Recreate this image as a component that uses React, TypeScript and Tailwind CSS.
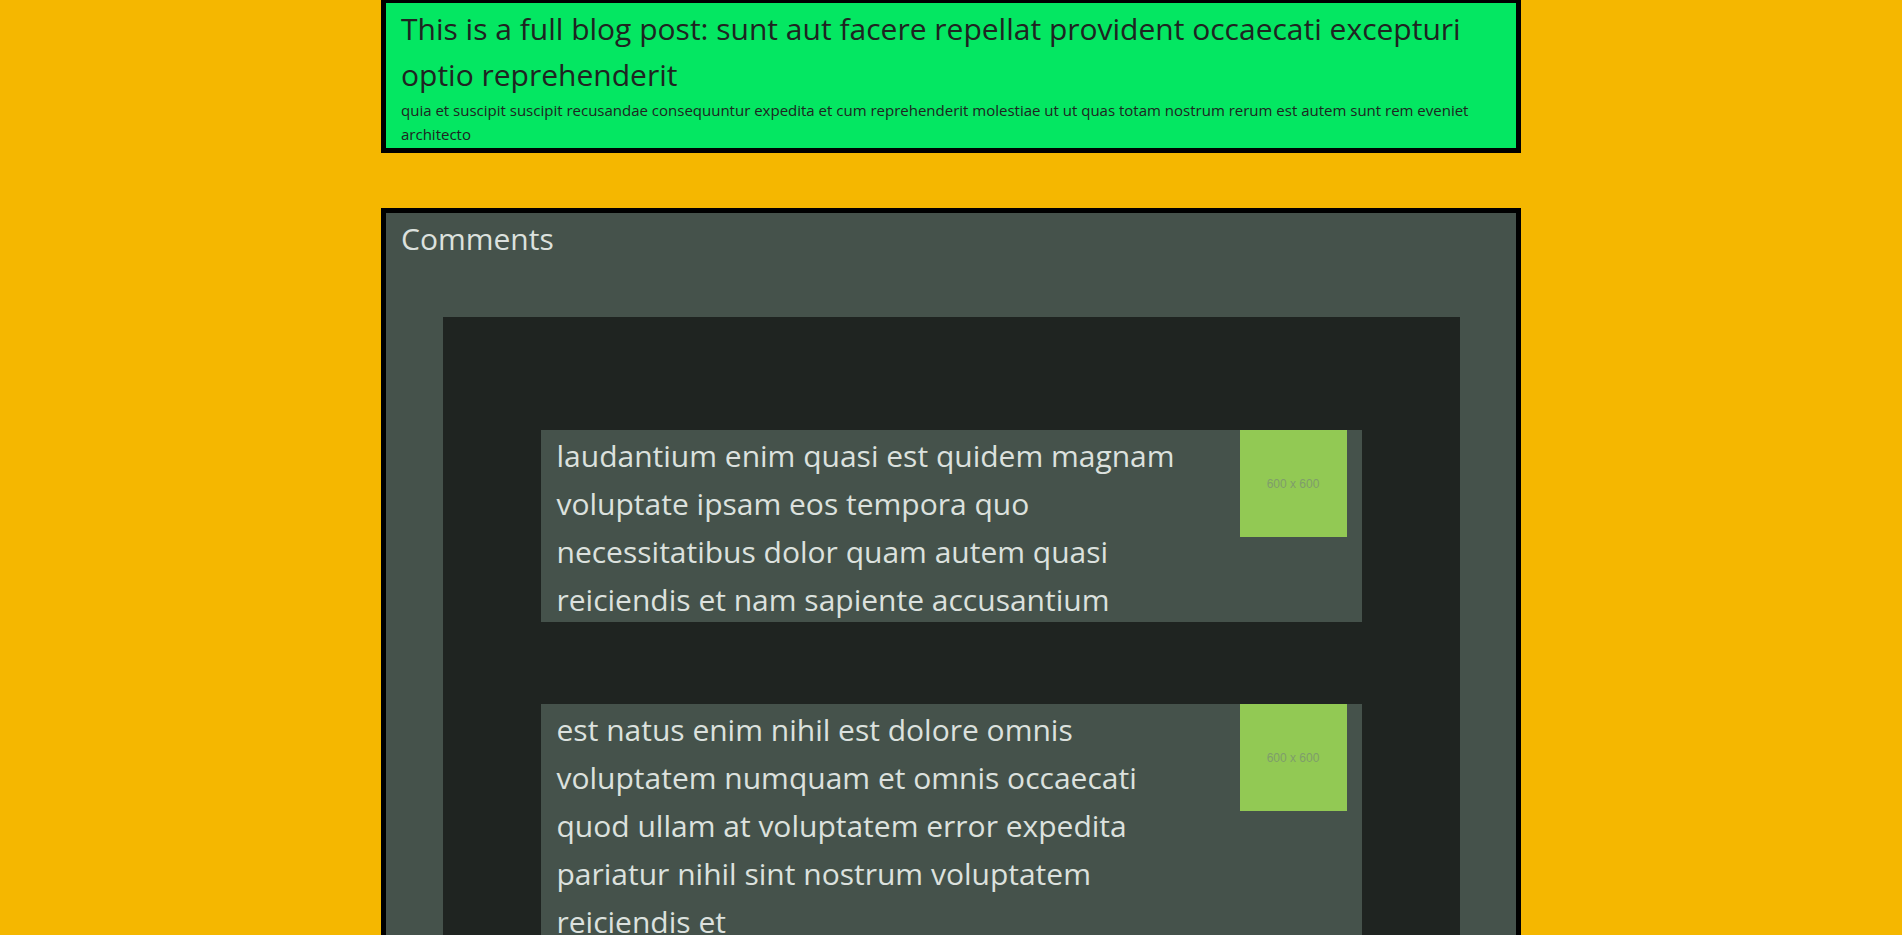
import React from 'react';

const comments = [
  {
    id: 1,
    body: 'laudantium enim quasi est quidem magnam voluptate ipsam eos tempora quo necessitatibus dolor quam autem quasi reiciendis et nam sapiente accusantium',
  },
  {
    id: 2,
    body: 'est natus enim nihil est dolore omnis voluptatem numquam et omnis occaecati quod ullam at voluptatem error expedita pariatur nihil sint nostrum voluptatem reiciendis et',
  },
  {
    id: 3,
    body: 'quia molestiae reprehenderit quasi aspernatur aut expedita occaecati aliquam eveniet laudantium omnis quibusdam delectus saepe quia accusamus maiores nam est cum et ducimus et vero voluptates excepturi deleniti ratione',
  },
];

function Placeholder() {
  return (
    <div className="relative flex h-[107px] w-[107px] shrink-0 items-center justify-center bg-[#92c954]">
      <span className="font-['Liberation_Sans',sans-serif] text-[12px] text-[#7f9d6b]">600 x 600</span>
    </div>
  );
}

function CommentCard({ body }: { body: string }) {
  return (
    <div className="mx-auto flex w-[821px] bg-[#45524b] pl-4 pr-[15px]">
      <p className="-mb-[2px] flex-1 pt-[2px] pr-10 text-[30px] leading-[48px] text-[#dce1de]">{body}</p>
      <Placeholder />
    </div>
  );
}

export default function App() {
  return (
    <div className="min-h-screen bg-[#f5b700] font-['Open_Sans',sans-serif]">
      <div className="mx-auto w-[1140px] pb-20">
        <div className="border-[5px] border-t-[3px] border-black bg-[#04e762] px-[15px] pt-[3px] pb-[2px] text-[#1f2421]">
          <h2 className="text-[30px] leading-[46px]">
            This is a full blog post: sunt aut facere repellat provident occaecati excepturi optio reprehenderit
          </h2>
          <p className="text-[15px] leading-6">
            quia et suscipit suscipit recusandae consequuntur expedita et cum reprehenderit molestiae ut ut quas totam nostrum rerum est autem sunt rem eveniet architecto
          </p>
        </div>

        <div className="mt-[55px] border-[5px] border-black bg-[#45524b]">
          <h3 className="px-[15px] pt-[2px] text-[30px] leading-[48px] text-[#dce1de]">Comments</h3>
          <div className="mx-auto mt-[54px] flex w-[90%] flex-col gap-[82px] bg-[#1f2421] pt-[113px] pb-[82px]">
            {comments.map((c) => (
              <CommentCard key={c.id} body={c.body} />
            ))}
          </div>
          <div className="h-[56px]" />
        </div>
      </div>
    </div>
  );
}
